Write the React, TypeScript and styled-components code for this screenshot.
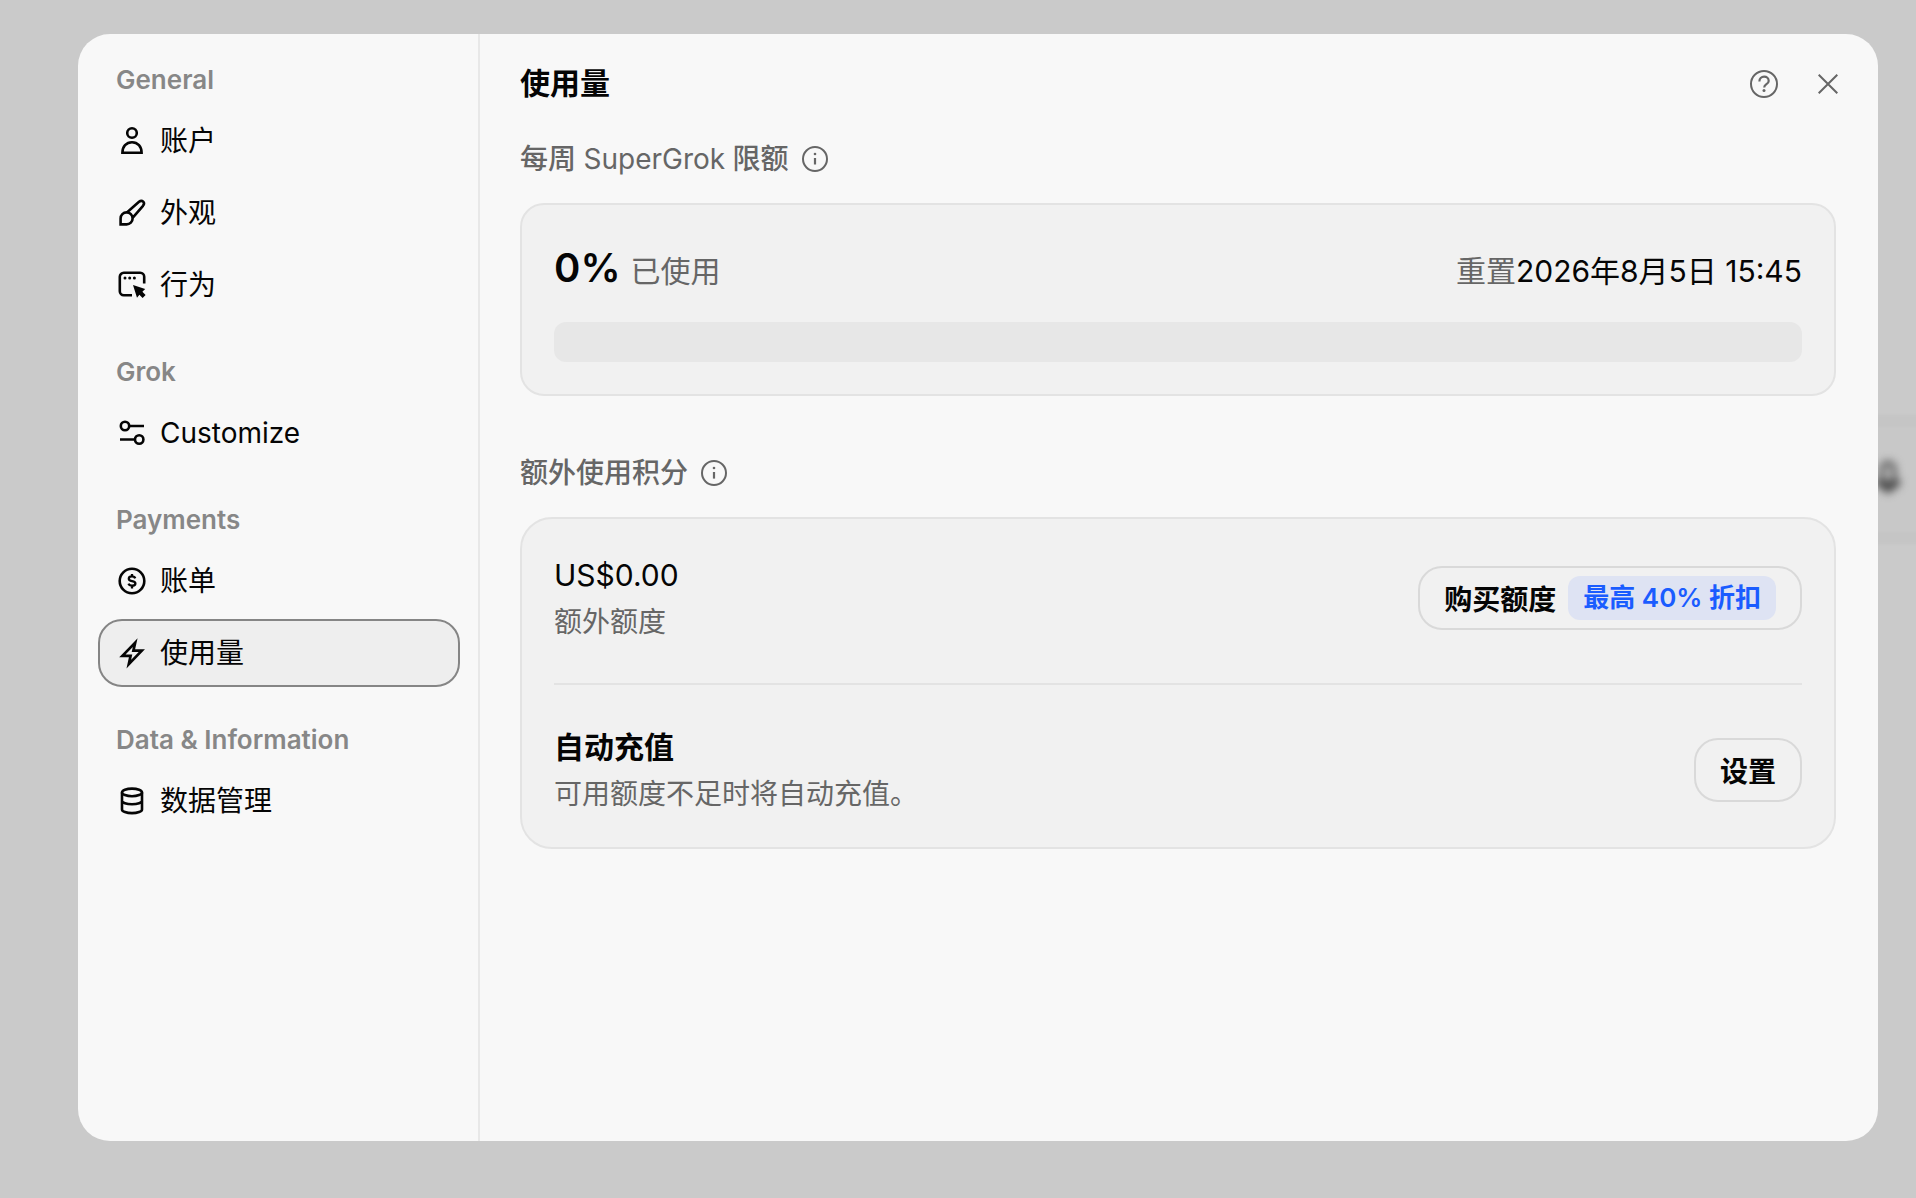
import React from "react";
import styled, { createGlobalStyle, css } from "styled-components";

const GlobalStyle = createGlobalStyle`
  *, *::before, *::after { box-sizing: border-box; }
  body {
    margin: 0;
    background: #cacaca;
    color: #050505;
    font-family: Inter, "Noto Sans CJK SC", sans-serif;
    -webkit-font-smoothing: antialiased;
  }
  h1, h2, p { margin: 0; }
  button { font: inherit; color: inherit; cursor: pointer; }
`;

const Page = styled.div`
  position: relative;
  min-height: 100vh;
  padding: 34px 38px 57px 78px;
  display: flex;
  overflow: hidden;
`;

const Backdrop = styled.div`
  position: absolute;
  inset: 0;
  overflow: hidden;
`;

const Composer = styled.div`
  position: absolute;
  top: 415px;
  left: 400px;
  right: -40px;
  height: 129px;
  background: #c8c8c8;
  border: 12px solid #c5c5c5;
  filter: blur(1px);
`;

const BackdropMic = styled.svg`
  position: absolute;
  top: 460px;
  right: 14px;
  color: #404040;
  filter: blur(4px);
`;

const Dialog = styled.div`
  position: relative;
  flex: 1;
  display: flex;
  background: #f8f8f8;
  border-radius: 32px;
  overflow: hidden;
`;

const Sidebar = styled.nav`
  width: 402px;
  flex: none;
  display: flex;
  flex-direction: column;
  gap: 30px;
  padding: 23px 18px 24px 20px;
  border-right: 2px solid #e8e8e8;
`;

const NavGroup = styled.section`
  display: flex;
  flex-direction: column;
  gap: 4px;
`;

const GroupLabel = styled.h2`
  padding: 0 18px;
  font-size: 26px;
  font-weight: 600;
  line-height: 46px;
  color: #878787;
`;

const NavItem = styled.button<{ $active?: boolean }>`
  height: 68px;
  display: flex;
  align-items: center;
  gap: 14px;
  padding: 0 18px;
  border: 2px solid transparent;
  border-radius: 24px;
  background: none;
  font-size: 28px;
  line-height: 40px;
  text-align: left;
  svg { flex: none; }
  ${(p) =>
    p.$active &&
    css`
      background: #eeeeee;
      border-color: #858585;
    `}
`;

const Main = styled.main`
  flex: 1;
  min-width: 0;
  padding: 26px 42px 40px 40px;
`;

const Header = styled.header`
  display: flex;
  align-items: flex-start;
  justify-content: space-between;
  margin-bottom: 29px;
`;

const Title = styled.h1`
  font-size: 30px;
  font-weight: 600;
  line-height: 46px;
`;

const HeaderActions = styled.div`
  display: flex;
  gap: 16px;
  margin-right: -16px;
`;

const IconButton = styled.button`
  width: 48px;
  height: 48px;
  display: grid;
  place-items: center;
  padding: 0;
  border: 0;
  background: none;
  color: #666666;
`;

const Section = styled.section`
  & + & { margin-top: 55px; }
`;

const SectionHeading = styled.div`
  display: flex;
  align-items: center;
  gap: 12px;
  height: 44px;
  margin-bottom: 22px;
  color: #666666;
  svg { flex: none; display: block; }
`;

const SectionTitle = styled.h2`
  font-size: 28px;
  font-weight: 500;
  line-height: 44px;
`;

const ProductName = styled.span`
  font-weight: 400;
`;

const Card = styled.div<{ $large?: boolean }>`
  padding: ${(p) => (p.$large ? "32px 32px 30px" : "32px")};
  border: 2px solid #e3e3e3;
  border-radius: ${(p) => (p.$large ? 32 : 24)}px;
  background: #f1f1f1;
`;

const UsageLine = styled.div`
  display: flex;
  align-items: baseline;
  justify-content: space-between;
  margin-bottom: 20px;
  font-size: 30px;
  line-height: 62px;
`;

const Percent = styled.strong`
  margin-right: 10px;
  font-size: 40px;
  font-weight: 600;
`;

const Muted = styled.span`
  color: #666666;
`;

const Meter = styled.div`
  height: 40px;
  border-radius: 12px;
  background: #e7e7e7;
  overflow: hidden;
`;

const MeterFill = styled.div`
  height: 100%;
  background: #050505;
`;

const Row = styled.div`
  display: flex;
  align-items: center;
  justify-content: space-between;
  & + & {
    margin-top: 38px;
    padding-top: 38px;
    border-top: 2px solid #e3e3e3;
  }
`;

const RowTitle = styled.p<{ $bold?: boolean }>`
  font-size: 30px;
  font-weight: ${(p) => (p.$bold ? 600 : 400)};
  line-height: 48px;
`;

const RowNote = styled.p`
  font-size: 28px;
  line-height: 46px;
  color: #666666;
`;

const PillButton = styled.button`
  height: 64px;
  display: flex;
  align-items: center;
  gap: 12px;
  padding: 0 24px;
  border: 2px solid #d9d9d9;
  border-radius: 24px;
  background: none;
  font-size: 28px;
  font-weight: 600;
`;

const Badge = styled.span`
  padding: 0 15px;
  border-radius: 12px;
  background: #dee3f3;
  color: #1a5cff;
  font-size: 26px;
  font-weight: 600;
  line-height: 44px;
`;

const Icon = ({ children }: { children: React.ReactNode }) => (
  <svg width="28" height="28" viewBox="1 1 28 28" overflow="visible" fill="none" stroke="currentColor" strokeWidth="2.6" aria-hidden="true">
    {children}
  </svg>
);

const icons = {
  user: (
    <Icon>
      <circle cx="15" cy="7" r="4.8" />
      <path d="M5.4 26.7c0-6 3.8-10.5 9.6-10.5s9.6 4.5 9.6 10.5z" />
    </Icon>
  ),
  brush: (
    <Icon>
      <path d="M3.6 26.4v-6a6 6 0 1 1 6 6zM10.2 14.2 22 3.8c3.2-2.6 6.6.8 4 4L15.8 19.6" />
    </Icon>
  ),
  behavior: (
    <Icon>
      <path d="M15 25.2H6.8a4 4 0 0 1-4-4V6.8a4 4 0 0 1 4-4h16.4a4 4 0 0 1 4 4V13.600" />
      <g fill="currentColor" stroke="none">
        <circle cx="8" cy="8" r="1.5" />
        <circle cx="12.7" cy="8" r="1.5" />
        <circle cx="17.4" cy="8" r="1.5" />
        <path d="M16 15 28.200 19l-2.800 2.800 3.200 3.200-3 3-3.200-3.200-2.400 3z" />
      </g>
    </Icon>
  ),
  sliders: (
    <Icon>
      <circle cx="8" cy="8" r="4.2" />
      <path d="M12.2 8H27M3 21.5h14.8" />
      <circle cx="22.2" cy="21.5" r="4.2" />
    </Icon>
  ),
  dollar: (
    <Icon>
      <circle cx="15" cy="15" r="12.3" />
      <path d="M18.2 12.4c-.4-1.3-1.6-2-3.2-2-1.9 0-3.2.9-3.2 2.3 0 3.3 6.6 1.3 6.6 4.7 0 1.4-1.4 2.3-3.4 2.3-1.700 0-3-.7-3.500-2M15 8v2.600M15 19.600V22.400" strokeWidth="2.3" />
    </Icon>
  ),
  bolt: (
    <Icon>
      <path d="M18.200 4.600 5.400 17.800h8.200l-1.800 8.400L24.800 12.600h-8.400z" strokeWidth="2.700" />
    </Icon>
  ),
  database: (
    <Icon>
      <ellipse cx="15" cy="6.4" rx="10" ry="3.8" />
      <path d="M5 6.4v17c0 2 4.5 3.7 10 3.7s10-1.7 10-3.7v-17M5 14.8c0 2 4.5 3.5 10 3.5s10-1.5 10-3.5" />
    </Icon>
  ),
};

const InfoIcon = () => (
  <svg width="28" height="28" viewBox="0 0 28 28" fill="none" stroke="currentColor" strokeWidth="2" aria-hidden="true">
    <circle cx="14" cy="14" r="12" />
    <path d="M14 13v6.6" strokeWidth="2.2" />
    <circle cx="14" cy="9" r="1.3" fill="currentColor" stroke="none" />
  </svg>
);

const groups: { label: string; items: { text: string; icon: React.ReactNode; active?: boolean }[] }[] = [
  {
    label: "General",
    items: [
      { text: "账户", icon: icons.user },
      { text: "外观", icon: icons.brush },
      { text: "行为", icon: icons.behavior },
    ],
  },
  { label: "Grok", items: [{ text: "Customize", icon: icons.sliders }] },
  {
    label: "Payments",
    items: [
      { text: "账单", icon: icons.dollar },
      { text: "使用量", icon: icons.bolt, active: true },
    ],
  },
  { label: "Data & Information", items: [{ text: "数据管理", icon: icons.database }] },
];

export default function App() {
  const used = 0;
  return (
    <Page lang="zh-CN">
      <GlobalStyle />
      <Backdrop aria-hidden="true">
        <Composer />
        <BackdropMic width="28" height="36" viewBox="0 0 28 36" overflow="visible" fill="none" stroke="currentColor" strokeWidth="4">
          <rect x="8" y="3" width="12" height="20" rx="6" />
          <path d="M3 20c2 5 6 8 11 8s9-3 11-8M14 28v5" strokeWidth="5" />
        </BackdropMic>
      </Backdrop>
      <Dialog role="dialog" aria-labelledby="dialog-title">
        <Sidebar>
          {groups.map((group) => (
            <NavGroup key={group.label}>
              <GroupLabel>{group.label}</GroupLabel>
              {group.items.map((item) => (
                <NavItem key={item.text} type="button" $active={item.active} aria-current={item.active ? "page" : undefined}>
                  {item.icon}
                  {item.text}
                </NavItem>
              ))}
            </NavGroup>
          ))}
        </Sidebar>
        <Main>
          <Header>
            <Title id="dialog-title">使用量</Title>
            <HeaderActions>
              <IconButton type="button" aria-label="帮助">
                <svg width="30" height="30" viewBox="0 0 30 30" fill="none" stroke="currentColor" strokeWidth="2">
                  <circle cx="15" cy="15" r="13" />
                  <path d="M10.4 12.4c0-2.8 2-4.7 4.7-4.7s4.6 1.8 4.6 4.2c0 3.4-4.5 3.2-4.5 6.5" strokeWidth="2.2" />
                  <circle cx="15" cy="21.6" r="1.5" fill="currentColor" stroke="none" />
                </svg>
              </IconButton>
              <IconButton type="button" aria-label="关闭">
                <svg width="20" height="20" viewBox="0 0 20 20" fill="none" stroke="currentColor" strokeWidth="2">
                  <path d="M.7.7l18.6 18.6M19.3.7.7 19.3" />
                </svg>
              </IconButton>
            </HeaderActions>
          </Header>
          <Section>
            <SectionHeading>
              <SectionTitle>
                每周 <ProductName>SuperGrok</ProductName> 限额
              </SectionTitle>
              <InfoIcon />
            </SectionHeading>
            <Card>
              <UsageLine>
                <div>
                  <Percent>{used}%</Percent>
                  <Muted>已使用</Muted>
                </div>
                <div>
                  <Muted>重置</Muted>2026年8月5日 15:45
                </div>
              </UsageLine>
              <Meter role="progressbar" aria-label="已使用" aria-valuenow={used} aria-valuemin={0} aria-valuemax={100}>
                <MeterFill style={{ width: `${used}%` }} />
              </Meter>
            </Card>
          </Section>
          <Section>
            <SectionHeading>
              <SectionTitle>额外使用积分</SectionTitle>
              <InfoIcon />
            </SectionHeading>
            <Card $large>
              <Row>
                <div>
                  <RowTitle>US$0.00</RowTitle>
                  <RowNote>额外额度</RowNote>
                </div>
                <PillButton type="button">
                  购买额度
                  <Badge>最高 40% 折扣</Badge>
                </PillButton>
              </Row>
              <Row>
                <div>
                  <RowTitle $bold>自动充值</RowTitle>
                  <RowNote>可用额度不足时将自动充值。</RowNote>
                </div>
                <PillButton type="button">设置</PillButton>
              </Row>
            </Card>
          </Section>
        </Main>
      </Dialog>
    </Page>
  );
}
